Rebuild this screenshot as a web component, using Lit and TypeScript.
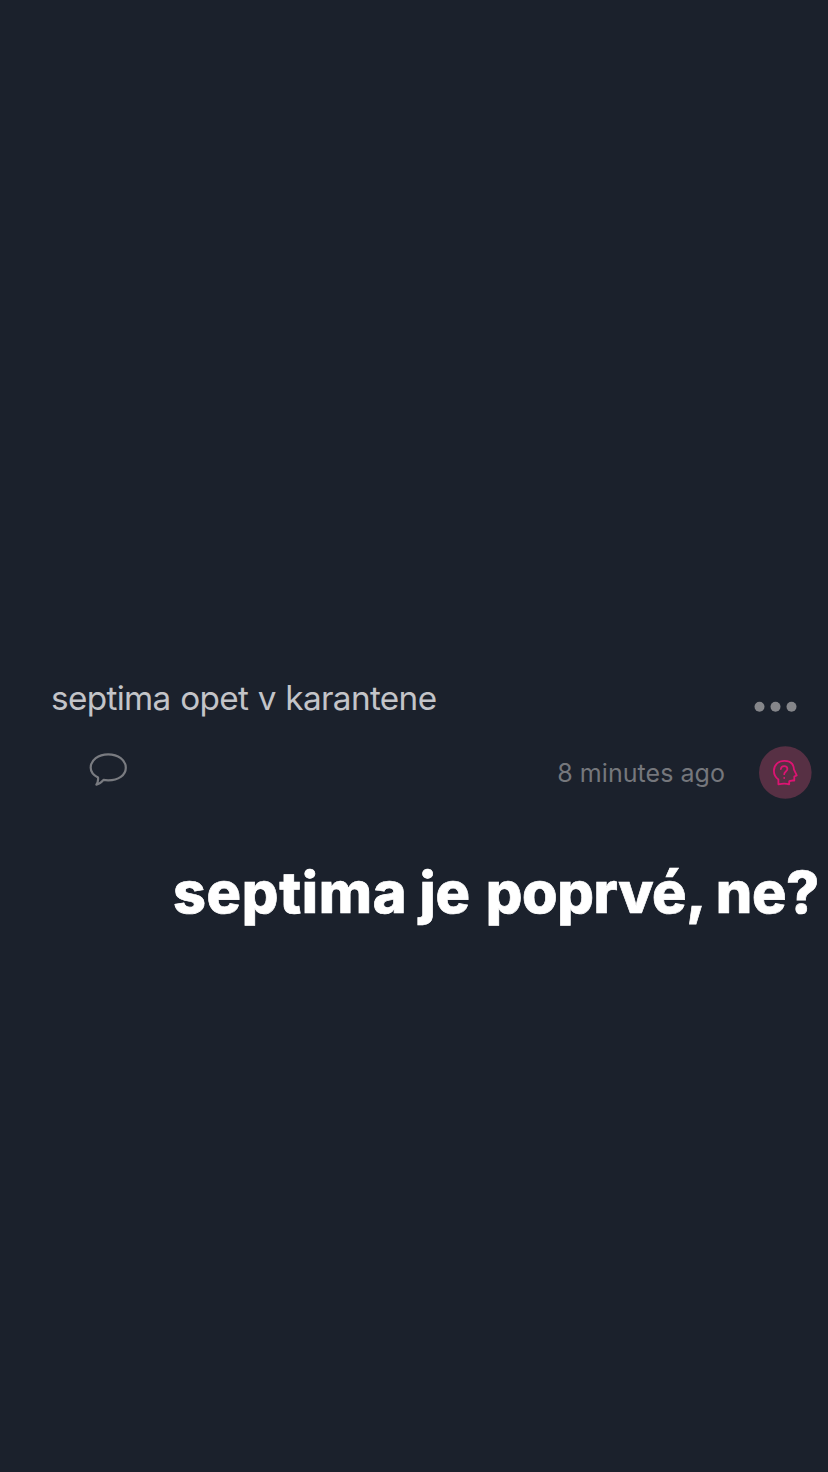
import { LitElement, html, css } from "lit";
import { customElement } from "lit/decorators.js";

@customElement("app-root")
class AppRoot extends LitElement {
  static styles = css`
    :host { display: flex; flex-direction: column; box-sizing: border-box; width: 828px; height: 1472px; overflow: hidden; padding-top: 676px; background: #1b212c; font-family: Inter, "Noto Sans", sans-serif; white-space: nowrap; }
    .title-row { display: flex; justify-content: space-between; height: 64px; padding: 0 31px 0 51px; }
    .title { font-size: 33.3px; line-height: 44px; letter-spacing: -0.65px; word-spacing: 0.8px; color: #c3c4c8; }
    .dots { display: block; margin-top: 25px; }
    .meta-row { display: flex; align-items: center; height: 66px; padding: 0 16px 0 88px; }
    .bubble { display: block; margin-top: -8px; }
    .time { margin-left: auto; font-size: 25px; line-height: 32px; letter-spacing: 0.05px; color: #75777c; }
    .avatar { display: block; margin: -2px 0 0 34px; }
    .caption { margin-top: 48px; padding-right: 9px; text-align: right; font-size: 57.5px; line-height: 76px; font-weight: 800; letter-spacing: -0.4px; color: #fff; -webkit-text-stroke: 0.7px #fff; }
    .lead { letter-spacing: 0.7px; }
    .tail { margin-left: 4px; }
  `;
  render() {
    return html`
      <div class="title-row">
        <span class="title">septima opet v karantene</span>
        <svg class="dots" width="44" height="12" viewBox="0 0 44 12" fill="#85868a"><circle cx="6.5" cy="5.7" r="5"/><circle cx="22.5" cy="5.7" r="5"/><circle cx="38.5" cy="5.7" r="5"/></svg>
      </div>
      <div class="meta-row">
        <svg class="bubble" width="40" height="36" viewBox="0 0 40 36" fill="none" stroke="#797b80" stroke-width="2.2" stroke-linejoin="round"><path d="M10 26.5C5.3 24 2.7 20.5 2.7 16.7C2.7 9 10.3 3.3 20.2 3.3S37.8 9 37.8 16.7S30.3 29.3 20.2 29.3C18.5 29.3 17 29.2 15.5 28.9C13.5 31.3 11.2 33.1 8.4 33.6C9.9 31.3 10.4 29 10 26.5Z"/></svg>
        <span class="time">8 minutes ago</span>
        <svg class="avatar" width="53" height="53" viewBox="0 0 53 53" fill="none" stroke="#dc1472" stroke-width="1.8" stroke-linecap="round" stroke-linejoin="round">
          <circle cx="26.3" cy="26.5" r="26.3" fill="#573044" stroke="none"/>
          <path d="M19.4 38.3V33.5C16.4 31.3 14.9 28.5 14.9 25C14.9 18.8 19.3 14.8 25.4 14.8C30.9 14.8 34.6 17.8 34.9 23.3L37.7 29.4L35.3 30.5V34.5C33 34.5 30.8 34.2 30.2 35.5V38.3C27 37.4 23 37.6 19.4 38.3Z"/>
          <path d="M21.8 23.2C22 21.2 23.4 20.2 25.2 20.2C27.2 20.2 28.4 21.5 28.4 23C28.4 25.5 25.2 25.5 25.2 28.2M25.2 31.8V32"/>
        </svg>
      </div>
      <div class="caption"><span class="lead">septima</span> je <span class="tail">poprvé, ne?</span></div>
    `;
  }
}
